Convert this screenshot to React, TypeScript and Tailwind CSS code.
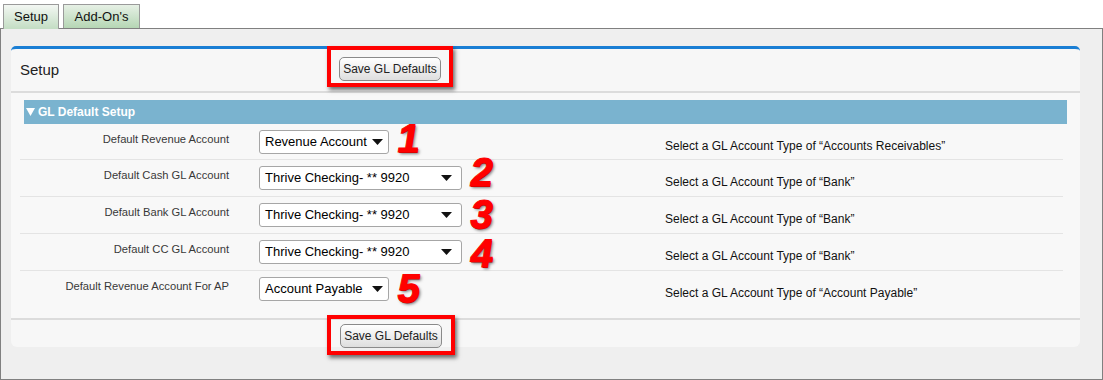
import React from "react";

type Row = {
  label: string;
  value: string;
  wide: boolean;
  num: string;
  numTop: string;
  help: string;
};

const rows: Row[] = [
  {
    label: "Default Revenue Account",
    value: "Revenue Account",
    wide: false,
    num: "1",
    numTop: "mt-[-1px]",
    help: "Select a GL Account Type of \u201cAccounts Receivables\u201d",
  },
  {
    label: "Default Cash GL Account",
    value: "Thrive Checking- ** 9920",
    wide: true,
    num: "2",
    numTop: "mt-[-3px]",
    help: "Select a GL Account Type of \u201cBank\u201d",
  },
  {
    label: "Default Bank GL Account",
    value: "Thrive Checking- ** 9920",
    wide: true,
    num: "3",
    numTop: "mt-[2px]",
    help: "Select a GL Account Type of \u201cBank\u201d",
  },
  {
    label: "Default CC GL Account",
    value: "Thrive Checking- ** 9920",
    wide: true,
    num: "4",
    numTop: "mt-[4px]",
    help: "Select a GL Account Type of \u201cBank\u201d",
  },
  {
    label: "Default Revenue Account For AP",
    value: "Account Payable",
    wide: false,
    num: "5",
    numTop: "mt-[2px]",
    help: "Select a GL Account Type of \u201cAccount Payable\u201d",
  },
];

function SaveButton({ frame }: { frame: string }) {
  return (
    <span className="relative inline-block">
      <span
        className={
          "absolute border-[4px] border-[#f00] shadow-[2px_3px_4px_rgba(0,0,0,0.55)] " +
          frame
        }
      />
      <button className="relative w-[102px] h-[24px] rounded-[5px] border border-[#8a8a8a] bg-linear-to-b from-[#ffffff] to-[#dedede] text-[12px] text-[#222] leading-none">
        Save GL Defaults
      </button>
    </span>
  );
}

function FakeSelect({ value, wide }: { value: string; wide: boolean }) {
  return (
    <div
      className={
        "mt-[6px] h-[24px] flex items-center justify-between bg-white border border-[#a6a6a6] rounded-[3px] pl-[5px] text-[13px] text-black " +
        (wide ? "w-[203px] pr-[9px]" : "w-[130px] pr-[5px]")
      }
    >
      <span className="whitespace-nowrap">{value}</span>
      <svg width="11" height="6" viewBox="0 0 11 6">
        <polygon points="0,0 11,0 5.5,6" fill="#111" />
      </svg>
    </div>
  );
}

export default function App() {
  return (
    <div className="w-[1103px] h-[380px] bg-white font-['Liberation_Sans',Arial,sans-serif] overflow-hidden">
      {/* tabs */}
      <div className="flex items-end h-[28px] pl-[3px] gap-[4px]">
        <div className="relative z-10 -mb-px w-[56px] h-[25px] border border-b-0 border-[#9a9a9a] bg-linear-to-b from-[#f3f7f3] to-[#c3ddc3] flex items-center justify-center text-[13px] text-[#111]">
          Setup
        </div>
        <div className="w-[77px] h-[24px] border border-b-0 border-[#9a9a9a] bg-linear-to-b from-[#e6f0e5] to-[#b5d6b4] flex items-center justify-center text-[13px] text-[#111]">
          Add-On's
        </div>
      </div>

      <div className="h-[352px] border border-[#808080] bg-[#efefef] pt-[17px] pl-[10px]">
        <div className="w-[1069px] bg-[#f7f7f7] border-t-[3px] border-[#1a7ed4] rounded-t-[5px] rounded-b-[6px]">
          {/* header */}
          <div className="flex h-[44px] border-b-2 border-[#dcdcdc] pl-[9px]">
            <div className="w-[319px] self-center text-[15px] text-[#222]">Setup</div>
            <div className="pt-[7px]">
              <SaveButton frame="-left-[12px] -right-[12px] -top-[10px] -bottom-[6px]" />
            </div>
          </div>

          {/* body */}
          <div className="pt-[7px] pb-[10px] bg-[#f8f8f8]">
            <div className="mx-[13px] h-[24px] bg-[#7ab3cf] flex items-center text-white text-[12px] font-bold pl-[2px]">
              <svg width="9" height="8" viewBox="0 0 9 8" className="mr-[3px]">
                <polygon points="0,0 9,0 4.5,8" fill="#fff" />
              </svg>
              GL Default Setup
            </div>
            <div className="ml-[9px] w-[1043px]">
              {rows.map((r, i) => (
                <div
                  key={i}
                  className={
                    "flex " +
                    (i === 0 ? "h-[36px] " : "h-[37px] ") +
                    (i < rows.length - 1 ? "border-b border-[#e4e4e4]" : "")
                  }
                >
                  <div className="w-[209px] mt-[9px] text-right text-[11.2px] leading-[13px] text-[#383838] whitespace-nowrap">
                    {r.label}
                  </div>
                  <div className="ml-[30px] w-[406px] flex items-start gap-[9px]">
                    <FakeSelect value={r.value} wide={r.wide} />
                    <span
                      className={
                        "relative inline-block -skew-x-[9deg] text-[40px] leading-[30px] h-[30px] font-bold text-[#f00] [-webkit-text-stroke:1px_#f00] [text-shadow:1px_1px_0_#b00000,2px_2px_3px_rgba(0,0,0,0.5)] " +
                        r.numTop
                      }
                    >
                      {r.num}
                    </span>
                  </div>
                  <div className="mt-[15px] text-[12px] leading-[14px] text-[#111] whitespace-nowrap">
                    {r.help}
                  </div>
                </div>
              ))}
            </div>
          </div>

          {/* footer */}
          <div className="h-[29px] border-t-2 border-[#dcdcdc] pl-[329px] pt-[3px]">
            <SaveButton frame="-left-[13px] -right-[13px] -top-[8px] -bottom-[7px]" />
          </div>
        </div>
      </div>
    </div>
  );
}
